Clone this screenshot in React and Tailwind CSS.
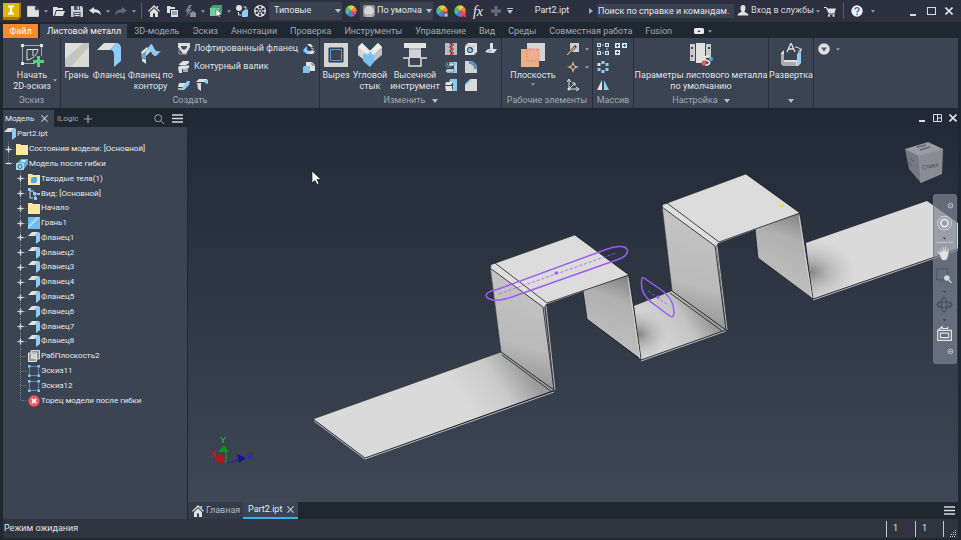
import { useState } from "react";

const BLUE = "#8ecbf5";
const LIGHT = "#dfe0e0";

// 12x12 glyphs used by the quick access bar, the ribbon and the browser
const glyphs = {
  newFile: <path d="M0 1h8l4 4v7H0z M8 1v4h4" fill={LIGHT} stroke="#8a8d94" strokeWidth=".6" />,
  open: <path d="M0 2h4l1 1h5v2H3L1 11H0z M3.5 6H12l-2 5H2z" fill={LIGHT} />,
  save: (
    <>
      <path d="M0 1h10.500L12 2.500V12H0z" fill="#c9ccd2" />
      <path d="M3 1h6v4H3z M2.500 7h7v5h-7z" fill="#4a5160" />
      <path d="M6.500 1.500h1.500v3H6.500z M3.500 8h5v1h-5z M3.500 10h5v1h-5z" fill={LIGHT} />
    </>
  ),
  undo: <path d="M0 5.500 5 2v2.300c4 0 6.500 1.200 7 6.200-1.500-2.500-3.500-3.200-7-3.200V9z" fill={LIGHT} />,
  redo: <path d="M12 5.500 7 2v2.300C3 4.300.5 5.500 0 10.500c1.500-2.500 3.500-3.200 7-3.200V9z" fill="#636975" />,
  home: (
    <>
      <path d="M6 0 12 6l-1 .8L6 2 1 6.800 0 6z M8.500 1H10v2.500L8.500 2z" fill={LIGHT} />
      <path d="M2 7.200 6 3.300l4 3.900V12H7V8.500H5V12H2z" fill={LIGHT} />
    </>
  ),
  pages: (
    <>
      <path d="M1 1h3l1 1h4v2H4v4H1z" fill={LIGHT} />
      <path d="M5 5h7v7H5z" fill={LIGHT} />
      <path d="M6 7h5M6 9h5" stroke="#596070" />
    </>
  ),
  bolt: (
    <>
      <path d="M5 0h3L5.500 4H8L2 12l1.500-5.500H1z" fill="#747a85" />
      <path d="M6 8l3-2 3 2v4H6z" fill="#8a8f99" />
    </>
  ),
  select: (
    <>
      <path d="M0 3 3 0h9v8l-3 3H0z" fill="#45a173" />
      <path d="M0 3h9v8H0z" fill="#71cc97" />
      <path d="M6 4l6 5.500-3 .2 1.500 2.300H9L8 10l-2 1.500z" fill="#fff" stroke="#303746" strokeWidth=".5" />
    </>
  ),
  parts: (
    <>
      <circle cx="3" cy="3" r="3" fill={LIGHT} />
      <path d="M7 6l1.500-1.500H12V11l-1 1H6V7z" fill={BLUE} />
      <path d="M2.500 7v3h3M7.500 2H10v2" fill="none" stroke={LIGHT} />
    </>
  ),
  ball: (
    <>
      <circle cx="6" cy="6" r="6" fill={LIGHT} />
      <circle cx="6" cy="6" r="2" fill="#2c3040" />
      <circle cx="6" cy="2.300" r="1.300" fill="#2c3040" />
      <circle cx="6" cy="9.700" r="1.300" fill="#2c3040" />
      <circle cx="2.800" cy="4.200" r="1.300" fill="#2c3040" />
      <circle cx="9.200" cy="4.200" r="1.300" fill="#2c3040" />
      <circle cx="2.800" cy="7.800" r="1.300" fill="#2c3040" />
      <circle cx="9.200" cy="7.800" r="1.300" fill="#2c3040" />
      <circle cx="6" cy="6" r="1" fill={LIGHT} />
    </>
  ),
  swatch: (
    <>
      <rect width="12" height="12" rx="2" fill="#8b8e95" />
      <circle cx="6" cy="6" r="5" fill="#d6d6d6" />
      <path d="M1 9h10l-2 3H3z" fill="#b6b8bb" />
    </>
  ),
  plus: <path d="M4.500 1h3v3.500H11v3H7.500V11h-3V7.500H1v-3h3.500z" fill="#666c78" />,
  user: <path d="M3.500 3a2.500 3 0 0 1 5 0c0 2-.8 2.500-1 4 2 .5 4 1.500 4 3.500H.5C.5 8.500 2.500 7.500 4.500 7c-.2-1.500-1-2-1-4z" fill={LIGHT} />,
  cart: (
    <>
      <path d="M0 2h2.500l.8 1.500H12L10.500 8H4.500L2 3H0z" fill={LIGHT} />
      <path d="M4 9h7" stroke={LIGHT} />
      <circle cx="5" cy="10.800" r="1.100" fill={LIGHT} />
      <circle cx="9.500" cy="10.800" r="1.100" fill={LIGHT} />
    </>
  ),
  help: (
    <>
      <circle cx="6" cy="6" r="5.700" fill="#edf0f4" />
      <path d="M4 4.600C4 1.900 8.200 2 8 4.500 7.900 5.900 6 5.800 6 7.400" fill="none" stroke="#3c69a5" strokeWidth="1.400" />
      <circle cx="6" cy="9.300" r=".9" fill="#3c69a5" />
    </>
  ),
  loft: (
    <>
      <path d="M0 0h12v4L8 11H5L0 4z" fill={LIGHT} />
      <path d="M3 3h6c0 5-6 5-6 0z" fill="#454d5b" />
      <path d="M1 6v5h8" fill="none" stroke="#9da1a8" />
    </>
  ),
  roll: (
    <>
      <path d="M1 3 5 0h6v2L8 4H1z M0 6l3-1.500h8V7L8 8H4v4H1z" fill={LIGHT} />
      <path d="M5 8h5v3H5z" fill="#a8abb0" />
    </>
  ),
  hem: (
    <>
      <path d="M1 4h8L6 8H0z" fill={LIGHT} />
      <path d="M4 9 9 2h3l-1 4-5 5H2z" fill={BLUE} />
      <path d="M0 9h5l-2 2H0z" fill="#b3b5b8" />
    </>
  ),
  bend: (
    <>
      <path d="M0 3l3-3h8l1 3H5z" fill={LIGHT} />
      <path d="M8 1h4v4L9 4z" fill={BLUE} />
      <path d="M1 4h4v8L2 10z" fill="#d6d7d8" />
    </>
  ),
  fold: (
    <>
      <path d="M4 1h4l2 3H8L6 3z M5 8h7l-2 3H4z" fill={LIGHT} />
      <path d="M1 6 4 3v4l4 2-4 2-4-3z" fill={BLUE} />
      <path d="M8 5c3 0 3 3 0 3" fill="none" stroke={LIGHT} />
    </>
  ),
  derive: (
    <>
      <path d="M3 1h6l3 3v6H3z" fill={LIGHT} />
      <path d="M9 1v3h3" fill="none" stroke="#6f7580" />
      <path d="M0 6l1-1h6v6l-1 1H0z" fill="#7cc3ee" />
    </>
  ),
  rip: (
    <>
      <path d="M0 0h12v12H0z" fill="#b9bbbe" />
      <path d="M4 0l2 2-2 2 2 2-2 2 2 2-1 2h3l1-2-2-2 2-2-2-2 2-2-1-2z" fill="#454b57" />
      <path d="M4 0l2 2-2 2 2 2-2 2 2 2-1 2M7 0l1 2-2 2 2 2-2 2 2 2-1 2" fill="none" stroke="#e5645f" strokeWidth=".9" />
    </>
  ),
  unfold: (
    <>
      <path d="M4 1h8v11H2V9h7V5H4z" fill="#a9d5ee" />
      <path d="M4 2h5v3H4z M2 8h7v3H0z" fill={LIGHT} stroke="#3f4856" strokeWidth=".6" />
      <path d="M0 4h3L1 1M1 6h5" fill="none" stroke="#4ba88a" strokeWidth="1.200" />
    </>
  ),
  refold: (
    <>
      <path d="M5 0h7v12H4l4-2V4H4z" fill="#8fc9e5" />
      <path d="M0 7h7v5H1z M1 3h7L6 6H0z" fill={LIGHT} />
    </>
  ),
  hole: (
    <>
      <path d="M0 3 3 0h9v9l-3 3H0z" fill={LIGHT} />
      <path d="M9 3v9M0 3h9l3-3" fill="none" stroke="#b3b5b8" strokeWidth=".6" />
      <circle cx="5" cy="7" r="3" fill="#394454" />
      <path d="M5 5a2 2 0 1 0 2 2z" fill={BLUE} />
    </>
  ),
  round: (
    <>
      <path d="M0 0h4c5 0 8 3 8 8v4H0z" fill="#d1d3d5" />
      <path d="M4 0c5 0 8 3 8 8L9 8C9 5 7 3 4 3z" fill="#5f91bd" />
    </>
  ),
  chamfer: (
    <>
      <path d="M6 0h6v12H0V6z" fill="#d9dadb" />
      <path d="M6 0 0 6" stroke="#83c6f2" strokeWidth="1.500" />
    </>
  ),
  punch: (
    <>
      <path d="M5 0h3v8H5z" fill={LIGHT} />
      <path d="M0 9l3-3h9l-3 4H5z" fill={LIGHT} />
      <path d="M3 7l3-1 1 3-3 1z" fill={BLUE} />
    </>
  ),
  axis: (
    <>
      <path d="M3 0h9v9H5L3 7z" fill="#cfcfce" />
      <path d="M0 12 9 3" stroke="#40372f" strokeWidth="2.500" />
      <path d="M0 12 8 4" stroke="#e8b184" strokeWidth="1.200" />
    </>
  ),
  point: (
    <>
      <path d="M6 0l1.500 4.500L12 6 7.500 7.500 6 12 4.500 7.500 0 6l4.500-1.500z" fill="#e8b184" />
      <circle cx="6" cy="6" r="2.200" fill="#3d4554" stroke="#e8b184" />
    </>
  ),
  ucs: (
    <>
      <path d="M2 1v9h9M2 10l6-6M0 3l2-3 2 3M9 8l3 2-3 2M5 4h3v3" fill="none" stroke={LIGHT} />
      <circle cx="2" cy="10" r="1.500" fill={LIGHT} />
    </>
  ),
  rectPattern: (
    <>
      <path d="M0 0h4v4H0z M8 0h4v4H8z M0 8h4v4H0z M8 8h4v4H8z" fill={LIGHT} />
      <path d="M5 2h2M5 10h2M2 5v2M10 5v2" stroke={BLUE} />
      <path d="M1 1h2v2H1z M9 1h2v2H9z M1 9h2v2H1z M9 9h2v2H9z" fill="#4c6f91" />
    </>
  ),
  sketchPattern: (
    <>
      <path d="M0 0h5v5H0z M7 0h5v5H7z M0 7h5v5H0z" fill="#d8eaf5" />
      <path d="M2.500 1v3M1 2.500h3M9.500 1v3M8 2.500h3M2.500 8v3M1 9.500h3" stroke="#315d82" />
    </>
  ),
  circPattern: (
    <g fill={BLUE}>
      <rect x="4.500" width="3" height="3" />
      <rect x="4.500" y="9" width="3" height="3" />
      <rect x=".5" y="2" width="3" height="3" fill={LIGHT} />
      <rect x="8.500" y="2" width="3" height="3" />
      <rect x=".5" y="7" width="3" height="3" />
      <rect x="8.500" y="7" width="3" height="3" />
    </g>
  ),
  mirror: (
    <>
      <path d="M5 1v10H0z" fill={LIGHT} />
      <path d="M7 1v10h5z" fill={BLUE} />
    </>
  ),
  more: (
    <>
      <circle cx="6" cy="6" r="5.800" fill={LIGHT} />
      <path d="M3 4.500h6L6 8.500z" fill="#555b67" />
    </>
  ),
  flange: (
    <>
      <path d="M0 4 4 0h6L7 4z" fill={LIGHT} />
      <path d="M7 3l3-3c2 0 2 1 2 3v6l-4 3V6C8 4 8 3.500 7 3z" fill={BLUE} />
    </>
  ),
  folder: <path d="M0 1h4l1 1h7v10H0z" fill="#fbe7a2" />,
  model: (
    <>
      <path d="M1 5 5 1h7v5l-4 5H1z" fill="#5fafd8" />
      <path d="M0 5h8v7H0z" fill="#a5d9e6" />
      <path d="M6 2h4l-1 2H5z" fill="#daf0f8" />
      <circle cx="4" cy="8.500" r="2" fill="none" stroke="#356c6b" />
    </>
  ),
  bodies: (
    <>
      <path d="M0 1h4l1 1h7v10H0z" fill="#fbe7a2" />
      <path d="M3 5l2-1h4v4L8 10H3z" fill="#54a9e7" />
    </>
  ),
  view: (
    <>
      <path d="M2 2v8h3M2 3h4M7 6v5M8 6h4" fill="none" stroke="#d3d9df" />
      <path d="M0 0h3v3H0z M5 4h3v3H5z M9 5h3v2H9z M6 9h3v3H6z" fill={BLUE} />
    </>
  ),
  face: (
    <>
      <path d="M0 0h12v12H0z" fill="#71bce9" />
      <path d="M0 9 9 0h3L0 12z" fill="#a8dafb" />
    </>
  ),
  plane: (
    <>
      <path d="M3 .5h8.500V9H3z" fill="#8c929b" stroke="#d5d7da" />
      <path d="M.5 3h8v8.500h-8z" fill="#969ba3" stroke="#e4e4e4" />
      <path d="M3 4h5v5H3z" fill="#d1d3d5" />
    </>
  ),
  sketch: (
    <>
      <path d="M1.500 1.500h9v9h-9z" fill="none" stroke="#568cb9" />
      <path d="M0 0h2.500v2.500H0z M9.500 0H12v2.500H9.500z M0 9.500h2.500V12H0z M9.500 9.500H12V12H9.500z" fill="#83c5ef" />
    </>
  ),
  stop: (
    <>
      <circle cx="6" cy="6" r="5.700" fill="#ef5758" />
      <path d="M3.800 3.800l4.400 4.400M8.200 3.800 3.800 8.200" stroke="#fff" strokeWidth="1.800" />
    </>
  ),
};

const wheelColors = ["#f6cf3e", "#f28d34", "#e9544e", "#a05bc4", "#4a7fd8", "#42b8c8", "#54bd66", "#b6d24b"];
const wheelSlices = [
  "M6 6 6 .3A5.700 5.700 0 0 1 10 2z",
  "M6 6 10 2A5.700 5.700 0 0 1 11.700 6z",
  "M6 6 11.700 6A5.700 5.700 0 0 1 10 10z",
  "M6 6 10 10A5.700 5.700 0 0 1 6 11.700z",
  "M6 6 6 11.700A5.700 5.700 0 0 1 2 10z",
  "M6 6 2 10A5.700 5.700 0 0 1 .3 6z",
  "M6 6 .3 6A5.700 5.700 0 0 1 2 2z",
  "M6 6 2 2A5.700 5.700 0 0 1 6 .3z",
];

function Glyph({ name }) {
  return (
    <svg viewBox="0 0 12 12" className="size-3 shrink-0" aria-hidden="true">
      {glyphs[name]}
    </svg>
  );
}

function Wheel({ badge }) {
  return (
    <svg viewBox="0 0 12 12" className="size-3 shrink-0" aria-hidden="true">
      {wheelSlices.map((d, i) => (
        <path key={d} d={d} fill={wheelColors[i]} />
      ))}
      {badge === "edit" ? <path d="M8 8h4v4H8z" fill="#8ecbf5" stroke="#2d3344" strokeWidth=".7" /> : null}
      {badge === "clear" ? <path d="M7 7l5 5M12 7l-5 5" stroke="#e8474b" strokeWidth="2" /> : null}
    </svg>
  );
}

function Caret({ dim }) {
  return (
    <svg viewBox="0 0 6 4" className={dim ? "h-[3px] w-1 shrink-0" : "h-1 w-1.5 shrink-0"} aria-hidden="true">
      <path d="M0 0h6L3 4z" fill={dim ? "#9da2ac" : "#b9bdc5"} />
    </svg>
  );
}

function QuickButton({ label, children }) {
  return (
    <button type="button" aria-label={label} className="flex h-full w-[18px] shrink-0 items-center justify-center">
      {children}
    </button>
  );
}

function MenuCaret({ label }) {
  return (
    <button type="button" aria-label={label} className="flex h-full w-2 shrink-0 items-center justify-center">
      <Caret dim />
    </button>
  );
}

function Picker({ label, value, icon }) {
  return (
    <div className="flex h-[18px] w-[73px] shrink-0 items-center bg-[#3a4252] pr-px pl-[3px]">
      {icon ? <Glyph name={icon} /> : null}
      <select
        aria-label={label}
        className="mr-1 min-w-0 flex-1 appearance-none overflow-hidden bg-transparent pl-0.5 text-[9px] text-[#e3e5e9] outline-none"
      >
        <option>{value}</option>
      </select>
      <Caret />
    </div>
  );
}

function TitleBar() {
  return (
    <header className="flex h-[22px] shrink-0 items-center bg-[#2c3040] px-[3px]">
      <button type="button" aria-label="Inventor" className="flex w-[21px] shrink-0">
        <svg viewBox="0 0 18 18" className="size-[18px]">
          <path d="M0 2h15l3-2v15l-3 3H0z" fill="#a37a08" />
          <path d="M0 1h16v14H0z" fill="#e2b50c" />
          <path d="M5 3.500h6v1.800H9.200v5.400H11v1.800H5v-1.800h1.800V5.300H5z" fill="#fff" />
        </svg>
      </button>
      <QuickButton label="Создать файл"><Glyph name="newFile" /></QuickButton>
      <MenuCaret label="Шаблоны" />
      <QuickButton label="Открыть"><Glyph name="open" /></QuickButton>
      <QuickButton label="Сохранить"><Glyph name="save" /></QuickButton>
      <QuickButton label="Отменить"><Glyph name="undo" /></QuickButton>
      <MenuCaret label="История отмены" />
      <QuickButton label="Повторить"><Glyph name="redo" /></QuickButton>
      <MenuCaret label="История повтора" />
      <span className="mx-[3px] h-4 w-px shrink-0 bg-[#5b606c]" />
      <QuickButton label="Главная"><Glyph name="home" /></QuickButton>
      <QuickButton label="Проекты"><Glyph name="pages" /></QuickButton>
      <QuickButton label="Обновить"><Glyph name="bolt" /></QuickButton>
      <MenuCaret label="Варианты обновления" />
      <QuickButton label="Выбор"><Glyph name="select" /></QuickButton>
      <MenuCaret label="Фильтр выбора" />
      <QuickButton label="Компоненты"><Glyph name="parts" /></QuickButton>
      <QuickButton label="Материал"><Glyph name="ball" /></QuickButton>
      <Picker label="Материал детали" value="Типовые" />
      <QuickButton label="Внешний вид"><Wheel /></QuickButton>
      <Picker label="Стиль внешнего вида" value="По умолчанию" icon="swatch" />
      <QuickButton label="Адаптировать вид"><Wheel badge="edit" /></QuickButton>
      <QuickButton label="Очистить вид"><Wheel badge="clear" /></QuickButton>
      <QuickButton label="Параметры">
        <span className="font-['Liberation_Serif',serif] text-[14px] text-[#e8e9ec] italic">fx</span>
      </QuickButton>
      <QuickButton label="Добавить"><Glyph name="plus" /></QuickButton>
      <button type="button" aria-label="Настроить панель" className="flex w-2.5 shrink-0 flex-col items-center gap-px">
        <span className="h-px w-1.5 bg-[#b9bdc5]" />
        <Caret />
      </button>
      <h1 className="min-w-0 flex-1 text-center text-[9px] text-[#e3e5e9]">Part2.ipt</h1>
      <svg viewBox="0 0 4 6" className="mr-1 h-1.5 w-1 shrink-0" aria-hidden="true">
        <path d="M0 0v6l4-3z" fill="#a4a8b1" />
      </svg>
      <input
        type="text"
        aria-label="Поиск"
        placeholder="Поиск по справке и командам."
        className="h-[14px] w-[137px] shrink-0 bg-[#3a4252] px-px text-[9px] text-white outline-none placeholder:text-[#e3e5e9]"
      />
      <button type="button" className="flex w-[87px] shrink-0 items-center gap-0.5 pl-[3px] text-[9px] whitespace-nowrap text-[#d5d8dd]">
        <Glyph name="user" />
        Вход в службы
        <Caret dim />
      </button>
      <QuickButton label="Магазин"><Glyph name="cart" /></QuickButton>
      <span className="mx-1 h-4 w-px shrink-0 bg-[#5b606c]" />
      <QuickButton label="Справка"><Glyph name="help" /></QuickButton>
      <button type="button" aria-label="Меню справки" className="mr-6 flex w-3.5 shrink-0 justify-center">
        <Caret dim />
      </button>
      <WindowButtons />
    </header>
  );
}

function WindowButtons() {
  return (
    <div className="flex shrink-0 items-center">
      <QuickButton label="Свернуть">
        <span className="mt-2 h-0.5 w-1.5 bg-[#d9dce1]" />
      </QuickButton>
      <QuickButton label="Развернуть">
        <span className="h-2 w-[9px] border border-[#d9dce1]" />
      </QuickButton>
      <QuickButton label="Закрыть"><Cross big /></QuickButton>
    </div>
  );
}

function Cross({ big }) {
  return (
    <svg viewBox="0 0 8 8" className={big ? "size-2 shrink-0" : "size-[7px] shrink-0"} aria-hidden="true">
      <path d="M.5.5l7 7M7.500.5l-7 7" stroke={big ? "#e1e3e7" : "#c3c7cd"} strokeWidth={big ? 1.6 : 1.2} />
    </svg>
  );
}

const tabs = [
  "Листовой металл",
  "3D-модель",
  "Эскиз",
  "Аннотации",
  "Проверка",
  "Инструменты",
  "Управление",
  "Вид",
  "Среды",
  "Совместная работа",
  "Fusion",
];

function RibbonTabs() {
  const [active, setActive] = useState(tabs[0]);

  return (
    <nav className="flex h-4 shrink-0 items-end bg-[#1f2731] px-[3px] text-[9px] whitespace-nowrap">
      <button type="button" className="mr-0.5 h-[14px] w-[35px] bg-[#f58a2f] leading-[14px] text-white">
        Файл
      </button>
      {tabs.map((t) => (
        <button
          key={t}
          type="button"
          onClick={() => setActive(t)}
          className={
            t === active
              ? "h-[14px] bg-[#3b4453] pr-1.5 pl-[7px] leading-[14px] text-[#f0f1f3]"
              : "h-[14px] pr-1.5 pl-[7px] leading-[14px] text-[#a2a7b0]"
          }
        >
          {t}
        </button>
      ))}
      <button type="button" aria-label="Вид ленты" className="ml-4 flex h-[14px] items-center gap-1">
        <svg viewBox="0 0 10 6" className="h-1.5 w-2.5">
          <rect width="10" height="6" rx="1.500" fill="#e6e8eb" />
          <path d="M3.500 4 5 2l1.500 2z" fill="#30384a" />
        </svg>
        <Caret dim />
      </button>
    </nav>
  );
}

const bigIcons = {
  start: (
    <>
      <path d="M2.500 4v16M4 2.500h16M21.500 4v9M4 20.500h11" fill="none" stroke="#a4a8af" />
      <path d="M1 1h3v3H1z M20 1h3v3h-3z M1 19h3v3H1z" fill={LIGHT} />
      <path d="M7 17V6.500h11C17 12 13 16 7 17z M13 6.500V13" fill="none" stroke={LIGHT} />
      <path d="M17 13h3v4h4v3h-4v4h-3v-4h-4v-3h4z" fill="#56d27a" />
    </>
  ),
  face: (
    <>
      <path d="M0 0h24v24H0z" fill="#c4c4c3" />
      <path d="M0 0h18L0 16z" fill="#dededd" />
      <path d="M24 4v20H6z" fill="#d9d9d8" />
    </>
  ),
  flange: (
    <>
      <path d="M0 7 7 0h12l-6 7z" fill={LIGHT} />
      <path d="M13 7l6-7c3 0 5 2 5 5v13l-7 6V12c0-3-1-5-4-5z" fill={BLUE} />
    </>
  ),
  contour: (
    <>
      <path d="M2 9 8 4c1 2 3 4 5 3L7 13v8l-4-3V12z" fill={LIGHT} />
      <path d="M8 6 12 1c3 1 3 7 6 7 2 1 4 0 4 0l-5 5c-5 0-4-6-7-6L6 12z" fill={BLUE} />
      <path d="M2 12 7 8v9l-4-1z" fill="#6fa2c5" />
    </>
  ),
  cut: (
    <>
      <path d="M0 0h24v24H0z" fill="#d5d5d4" />
      <path d="M5 5h14v14H5z" fill="#3b4453" stroke="#27384d" />
      <path d="M6.500 6.500h11v11h-11z" fill="none" stroke="#5b9bd0" />
    </>
  ),
  corner: (
    <>
      <path d="M0 4 4 0l8 8v14L0 12z" fill="#d3d4d4" />
      <path d="M24 4 20 0l-8 8v14l12-10z" fill="#bfc1c2" />
      <path d="M5 12l7-5 4 3v9l-4 5-7-6z" fill="#79c0ee" />
      <path d="M0 4 4 0l8 8-2 4z M24 4l-4-4-8 8 3 4z" fill="#ececeb" />
    </>
  ),
  punchTool: (
    <>
      <path d="M1 0h22v5H1z" fill="#e4e4e3" />
      <path d="M6 5h12v10H6z" fill="#d2d3d3" />
      <path d="M6 6h12" stroke="#999ca1" />
      <path d="M0 15h6v8h12v-8h6" fill="none" stroke={LIGHT} strokeWidth="1.500" />
    </>
  ),
  plane: (
    <>
      <path d="M6 0h18v18H6z" fill="#d4d4d3" />
      <path d="M0 6h18v18H0z" fill="#e8b083" />
      <path d="M6 6h12v12H6z" fill="#f0ae91" stroke="#dd8776" strokeDasharray="2 1" />
    </>
  ),
  settings: (
    <>
      <path d="M1 1h5v17H1z M17 1h5v14h-5z" fill="#c9cacb" />
      <path d="M7 0h9v20H7z" fill="#dfe0e0" />
      <path d="M2 4h2v2H2z M2 12h2v2H2z M19 4h2v2h-2z" fill="#434b5a" />
      <path d="M20 13c-7 0-4 4-1 5s2 4-3 4" fill="none" stroke="#f0f0f0" strokeWidth="1.500" />
      <circle cx="15" cy="20" r="2.500" fill="#ed5757" />
      <circle cx="22" cy="16" r="2" fill="#59a9df" />
    </>
  ),
  flat: (
    <>
      <path d="M2 10 5 7v10h14V9l3 2v9l-3 3H5l-3-3z" fill="#dedede" />
      <path d="M2 11h3v8h12v4H4l-2-2z" fill="#a9abad" />
      <path d="M18 11l4-3v11l-4 4z" fill="#91cdf5" />
      <path d="M8 9 12 0l4 9M9 6h6" fill="none" stroke={LIGHT} strokeWidth="1.300" />
      <path d="M16 4c3 0 5 1 6 4M22 5v3h-3" fill="none" stroke={LIGHT} />
    </>
  ),
};

function BigButton({ icon, lines, width, caret }) {
  return (
    <button type="button" className={`flex shrink-0 flex-col items-center self-start pt-[5px] text-[9px] leading-[11px] whitespace-nowrap text-[#e0e2e6] ${width}`}>
      <svg viewBox="0 0 24 24" className="mb-[3px] size-6" aria-hidden="true">
        {bigIcons[icon]}
      </svg>
      {lines.map((l) => (
        <span key={l}>{l}</span>
      ))}
      {caret ? <span className="mt-0.5 flex"><Caret dim /></span> : null}
    </button>
  );
}

function SmallButton({ icon, label, text, caret }) {
  return (
    <button type="button" aria-label={label} className="flex h-[18px] items-center gap-1 text-[9px] whitespace-nowrap text-[#e0e2e6]">
      <Glyph name={icon} />
      {text}
      {caret ? <span className="ml-0.5 flex"><Caret dim /></span> : null}
    </button>
  );
}

function Group({ title, width, menu, children }) {
  return (
    <section className={`flex shrink-0 flex-col border-r border-[#252e39] ${width}`}>
      <div className="flex flex-1">{children}</div>
      <footer className="flex h-[14px] items-center justify-center gap-1.5 text-[9px] whitespace-nowrap text-[#a4a9b2]">
        {title}
        {menu ? <Caret /> : null}
      </footer>
    </section>
  );
}

function Ribbon() {
  return (
    <div className="mx-[3px] flex h-[70px] shrink-0 bg-[#3b4453]">
      <Group title="Эскиз" width="w-[58px]">
        <BigButton icon="start" lines={["Начать", "2D-эскиз"]} width="w-[50px] ml-1" />
        <button type="button" aria-label="Варианты эскиза" className="mb-3 -ml-1 self-end">
          <Caret dim />
        </button>
      </Group>
      <Group title="Создать" width="w-[259px]">
        <BigButton icon="face" lines={["Грань"]} width="w-[31px]" />
        <BigButton icon="flange" lines={["Фланец"]} width="w-[34px]" />
        <BigButton icon="contour" lines={["Фланец по", "контору"]} width="w-[49px]" />
        <div className="ml-[3px] flex w-[125px] flex-col pt-0.5">
          <SmallButton icon="loft" text="Лофтированный фланец" />
          <SmallButton icon="roll" text="Контурный валик" />
          <div className="flex gap-1.5">
            <SmallButton icon="hem" label="Отбортовка" />
            <SmallButton icon="bend" label="Сгиб" />
          </div>
        </div>
        <div className="flex flex-col pt-0.5">
          <SmallButton icon="fold" label="Согнуть" />
          <SmallButton icon="derive" label="Производный" />
        </div>
      </Group>
      <Group title="Изменить" width="w-[182px]" menu>
        <BigButton icon="cut" lines={["Вырез"]} width="w-[32px]" />
        <BigButton icon="corner" lines={["Угловой", "стык"]} width="w-[36px]" />
        <BigButton icon="punchTool" lines={["Высечной", "инструмент"]} width="w-[54px]" />
        <div className="ml-[3px] grid grid-cols-[20px_20px_12px] content-start pt-0.5">
          <SmallButton icon="rip" label="Разрыв" />
          <SmallButton icon="hole" label="Отверстие" />
          <SmallButton icon="punch" label="Стык" />
          <SmallButton icon="unfold" label="Разогнуть" />
          <SmallButton icon="round" label="Скругление" />
          <span />
          <SmallButton icon="refold" label="Повторно согнуть" />
          <SmallButton icon="chamfer" label="Фаска" />
        </div>
      </Group>
      <Group title="Рабочие элементы" width="w-[91px]">
        <BigButton icon="plane" lines={["Плоскость"]} width="w-[62px]" caret />
        <div className="ml-[3px] flex flex-col pt-0.5">
          <SmallButton icon="axis" label="Ось" caret />
          <SmallButton icon="point" label="Точка" caret />
          <SmallButton icon="ucs" label="ПСК" />
        </div>
      </Group>
      <Group title="Массив" width="w-[41px]">
        <div className="ml-1 grid grid-cols-[18px_12px] content-start pt-0.5">
          <SmallButton icon="rectPattern" label="Прямоугольный массив" />
          <SmallButton icon="sketchPattern" label="Массив по эскизу" />
          <SmallButton icon="circPattern" label="Круговой массив" />
          <span />
          <SmallButton icon="mirror" label="Зеркало" />
        </div>
      </Group>
      <Group title="Настройка" width="w-[135px]" menu>
        <BigButton icon="settings" lines={["Параметры листового металла", "по умолчанию"]} width="w-full" />
      </Group>
      <Group width="w-[45px]" menu>
        <BigButton icon="flat" lines={["Развертка"]} width="w-full" />
      </Group>
      <div className="ml-1 pt-0.5">
        <SmallButton icon="more" label="Дополнительно" caret />
      </div>
    </div>
  );
}

const tree = [
  { label: "Part2.ipt", icon: "flange", level: 0 },
  { label: "Состояния модели: [Основной]", icon: "folder", level: 1, toggle: "+" },
  { label: "Модель после гибки", icon: "model", level: 1, toggle: "-" },
  { label: "Твердые тела(1)", icon: "bodies", level: 2, toggle: "+" },
  { label: "Вид: [Основной]", icon: "view", level: 2, toggle: "+" },
  { label: "Начало", icon: "folder", level: 2, toggle: "+" },
  { label: "Грань1", icon: "face", level: 2, toggle: "+" },
  ...[1, 2, 3, 4, 5, 6, 7, 8].map((n) => ({ label: `Фланец${n}`, icon: "flange", level: 2, toggle: "+" })),
  { label: "РабПлоскость2", icon: "plane", level: 2 },
  { label: "Эскиз11", icon: "sketch", level: 2 },
  { label: "Эскиз12", icon: "sketch", level: 2 },
  { label: "Торец модели после гибки", icon: "stop", level: 2, last: true },
];

const indent = ["pl-px", "pl-0", "pl-3"];

function TreeRow({ item }) {
  return (
    <li className={`flex min-h-0 items-center whitespace-nowrap ${indent[item.level]}`}>
      {item.level > 0 ? (
        <svg viewBox="0 0 12 15" className="mr-px h-[15px] w-3 shrink-0" aria-hidden="true">
          <path
            d={item.last || item.toggle === "-" ? "M5.500 0v7.500H12" : "M5.500 0v15M5.500 7.500H12"}
            fill="none"
            stroke="#767d89"
            strokeDasharray="1 1"
          />
          {item.toggle ? <path d="M2.500 7.500h6" stroke="#d5d8dd" strokeWidth="1.300" /> : null}
          {item.toggle === "+" ? <path d="M5.500 4.500v6" stroke="#d5d8dd" strokeWidth="1.300" /> : null}
        </svg>
      ) : null}
      <Glyph name={item.icon} />
      <span className="ml-px">{item.label}</span>
    </li>
  );
}

function Browser() {
  return (
    <aside className="flex w-[184px] shrink-0 flex-col bg-[#3b4453] text-[8px] text-[#e8eaed]">
      <div className="flex h-[17px] shrink-0 items-center bg-[#1f2731]">
        <button type="button" className="flex h-full w-[51px] items-center justify-between bg-[#3b4453] pr-1.5 pl-0.5">
          Модель
          <Cross />
        </button>
        <button type="button" className="ml-[3px] text-[#a2a7b0]">iLogic</button>
        <button type="button" aria-label="Добавить вкладку" className="ml-1.5">
          <svg viewBox="0 0 8 8" className="size-2">
            <path d="M4 0v8M0 4h8" stroke="#a2a7b0" strokeWidth="1.200" />
          </svg>
        </button>
        <button type="button" aria-label="Поиск в браузере" className="mr-2 ml-auto">
          <svg viewBox="0 0 10 10" className="size-2.5">
            <circle cx="4.200" cy="4.200" r="3.500" fill="none" stroke="#9da3ad" />
            <path d="M7 7l3 3" stroke="#9da3ad" />
          </svg>
        </button>
        <button type="button" aria-label="Меню браузера" className="mr-1">
          <Bars />
        </button>
      </div>
      <ul className="grid h-[281px] auto-rows-fr">
        {tree.map((item) => (
          <TreeRow key={item.label} item={item} />
        ))}
      </ul>
    </aside>
  );
}

function Bars() {
  return (
    <svg viewBox="0 0 11 9" className="h-[9px] w-[11px]" aria-hidden="true">
      <path d="M0 1h11M0 4.500h11M0 8h11" stroke="#d5d8dd" strokeWidth="1.500" />
    </svg>
  );
}

function Scene() {
  return (
    <svg
      viewBox="188 110 770 392"
      preserveAspectRatio="xMidYMid slice"
      className="absolute inset-0 size-full"
      role="img"
      aria-label="3D-вид детали"
    >
      <defs>
        <linearGradient id="wall" x1=".35" y1="0" x2=".2" y2="1">
          <stop offset="0" stopColor="#c6c6c6" />
          <stop offset=".6" stopColor="#bababa" />
          <stop offset=".88" stopColor="#989898" />
          <stop offset="1" stopColor="#a6a6a6" />
        </linearGradient>
        <linearGradient id="inner" x1=".7" y1="0" x2=".45" y2="1">
          <stop offset="0" stopColor="#828282" />
          <stop offset=".3" stopColor="#b0b0b0" />
          <stop offset="1" stopColor="#c2c2c2" />
        </linearGradient>
        <linearGradient id="plate" gradientUnits="userSpaceOnUse" x1="465" y1="404" x2="524" y2="364">
          <stop offset="0" stopColor="#dadada" />
          <stop offset=".55" stopColor="#c9c9c9" />
          <stop offset="1" stopColor="#999" />
        </linearGradient>
        <linearGradient id="valley" gradientUnits="userSpaceOnUse" x1="658" y1="336" x2="700" y2="308">
          <stop offset="0" stopColor="#d2d2d2" />
          <stop offset=".6" stopColor="#c4c4c4" />
          <stop offset="1" stopColor="#9a9a9a" />
        </linearGradient>
        <radialGradient id="shade">
          <stop offset="0" stopColor="#666" stopOpacity=".75" />
          <stop offset=".4" stopColor="#808080" stopOpacity=".4" />
          <stop offset="1" stopColor="#aaa" stopOpacity="0" />
        </radialGradient>
        <clipPath id="valleyClip"><path d="M634 306 672 291 726 330 641 360z" /></clipPath>
        <clipPath id="rightClip"><path d="M806 243 927 201 958 223v26L813 299z" /></clipPath>
      </defs>

      {/* right plate and valley floor lie behind the walls */}
      <path d="M806 243 927 201 958 223v26L813 299z" fill="#dadada" />
      <ellipse cx="810" cy="272" rx="46" ry="32" fill="url(#shade)" clipPath="url(#rightClip)" />
      <path d="M634 306 672 291 726 330 641 360z" fill="url(#valley)" />
      <ellipse cx="638" cy="334" rx="30" ry="24" fill="url(#shade)" clipPath="url(#valleyClip)" />
      <path d="M313 419 501 352l53 38-189 68z" fill="url(#plate)" />

      <path d="M755 229 800 213l13 86-55-41z" fill="url(#inner)" />
      <path d="M583 291 629 275l12 84-54-40z" fill="url(#inner)" />
      <path d="M490 267 544 305l10 85-53-38z" fill="url(#wall)" />
      <path d="M662 206 716 244l10 86-54-39z" fill="url(#wall)" />
      <path d="M490 265 575 235l54 40-85 30z" fill="#dcdcdc" />
      <path d="M662 205 746 174l54 39-84 31z" fill="#dcdcdc" />
      <path d="M491 267 545 306M663 206 717 245" stroke="#e0e0e0" strokeWidth="3" />

      <g fill="none" stroke="#1b1d20" strokeWidth=".8">
        <path d="M313 419 365 458 554 391 M501 352 554 390 M502 355 552 392" />
        <path d="M490 268 543 307 554 390 M495 263 547 303 629 275 641 359 M575 235l54 40" />
        <path d="M583 291l4 28 54 41 85-30 M672 291l54 39 M670 293 722 331" />
        <path d="M662 207 715 246 726 330 M667 203 719 242 800 213 813 299 M746 174l54 39" />
        <path d="M755 229l3 29 55 41 145-50" />
      </g>
      <g fill="none" stroke="#1b1d20" strokeWidth=".5">
        <path d="M490 265l11 87M490 265 575 235M662 205l10 86M662 205 746 174M313 419 501 352" />
      </g>
      <g fill="none" stroke="#d8d8d8" strokeWidth=".8">
        <path d="M314 421 365 459 554 392 M546 306l9 84 M628 278l12 81 M717 246l10 84 M799 216l13 82" />
        <path d="M641 361 726 331 M813 300 958 250" />
      </g>

      <g fill="none" stroke="#9a5cf5" strokeWidth="1.500">
        <path d="M497 289.500 606 249.500C619 244.500 627 246 627.500 251c0 4-5 7-11 9L509 298c-13 4-22 2-23-2.500 0-3 4-4.500 11-6z" />
        <path d="M644 278 660 289c9 6 14 15 14 24 0 4-2 4.500-5 2.500L655 305c-9-6-14-14-13.500-23 0-4 1-5 2.500-4z" />
        <path d="M499 294 616 253M648 291l20 14" strokeWidth=".8" strokeDasharray="3 2" />
      </g>
      <path d="M554 273l2.500-2 2 2-2 2z M656 297l2-2 2 2-2 2z" fill="#9a5cf5" />
      <path d="M780 205h4v2h-4z" fill="#eedb32" />

      {/* view cube */}
      <path d="M905 149 928 142l15 7-24 7z" fill="#999ca1" />
      <path d="M905 149l14 7 2 27-12-14z" fill="#777a80" />
      <path d="M919 156l24-7-1 25-21 9z" fill="#898c91" />
      <path d="M905 149 919 156 943 149M919 156l2 27" stroke="#a6a8ac" strokeWidth=".6" fill="none" />
      <path d="M917 147l9-2M920 150l10-3M910 158l4 4M908 162l4 4" stroke="#62666f" strokeWidth="1.500" />
      <text x="922" y="170" transform="rotate(-13 922 170)" fontSize="6" fill="#4d515a" className="font-[Roboto,sans-serif]">
        Слева
      </text>

      {/* axis triad */}
      <path d="M226 463V451" stroke="#18a52a" />
      <path d="M218 452h11l-5-7z" fill="#129022" />
      <path d="M227 463l12-3" stroke="#1616c4" strokeDasharray="3 1" />
      <path d="M237 454l9 4-7 5z" fill="#1111a6" />
      <path d="M217 456l5-2 3 4-2 5-6-1-2-3z" fill="#ba1515" />
      <g fontSize="9" className="font-['Liberation_Sans',sans-serif]">
        <text x="220" y="443" fontWeight="700" fill="#15b52d">Y</text>
        <text x="210" y="457" fontWeight="700" fill="#c31818">X</text>
        <text x="247" y="459" fontWeight="700" fill="#2222d8">Z</text>
      </g>

      <path d="M312 171v12l3-2.500 2 4 2-1-2-4h4z" fill="#fff" stroke="#15181d" strokeWidth=".7" />
    </svg>
  );
}

function NavBar() {
  return (
    <div className="absolute top-[84px] right-px flex h-[170px] w-6 flex-col items-center rounded-[3px] border border-[#6e7684]/60 bg-[#7d8593]/70">
      <svg viewBox="0 0 24 170" className="h-full w-full" aria-hidden="true">
        <g fill="none" stroke="#c7cbd1">
          <circle cx="18" cy="5" r="2.500" />
          <path d="M17 4l2 2M19 4l-2 2" strokeWidth=".7" />
          <circle cx="11.500" cy="24" r="7.500" stroke="#d8dade" />
          <circle cx="11.500" cy="24" r="4" strokeWidth="2" stroke="#e3e4e7" />
          <path d="M2 45h19" />
        </g>
        <path
          d="M6 58l-3-3 1-1 3 2-1-5h1l2 4V49h1.500l.5 5 1-5H13.500v6l2-4 1 .5-1 8c-1 4-2 5-5 5s-3-3-4.500-6.500z"
          fill="#e2e3e5"
          stroke="#828792"
          strokeWidth=".6"
        />
        <g fill="none" stroke="#3f4653">
          <path d="M3 74h12v12H3z" strokeDasharray="2 1" />
          <path d="M11 105c4 0 4 16 0 16s-4-16 0-16z M4 113c0-4 15-4 15 0s-15 4-15 0z M6 109l-3 4 3 4M17 109l3 4-3 4" />
        </g>
        <circle cx="14" cy="84" r="3" fill="#d5d8dc" />
        <path d="M16 86l3 3" stroke="#d5d8dc" strokeWidth="1.500" />
        <path d="M9.500 40h4l-2 2z M9.500 98h4l-2 2z M9.500 129h4l-2 2z" fill="#343b47" />
        <path d="M4 141h15v11H4z M7 144h9v5H7z M5 140l4-3v2h6v-2" fill="none" stroke="#e2e4e7" strokeWidth="1.300" />
        <circle cx="18" cy="164" r="2.500" fill="none" stroke="#c7cbd1" />
        <path d="M16.500 164h3" stroke="#c7cbd1" />
      </svg>
    </div>
  );
}

function Viewport() {
  return (
    <main className="flex min-w-0 flex-1 flex-col">
      <div className="relative min-h-0 flex-1 overflow-hidden bg-linear-to-b from-[#222936] to-[#3e4755]">
        <Scene />
        <div className="absolute top-0 right-0 flex h-4 items-center gap-[7px]">
          <button type="button" aria-label="Свернуть документ">
            <span className="mt-1.5 block h-0.5 w-1.5 bg-[#d9dce1]" />
          </button>
          <button type="button" aria-label="Упорядочить окна" className="ml-px">
            <svg viewBox="0 0 9 8" className="h-2 w-[9px]">
              <path d="M.5.5h8v7h-8zM4.500.5v7M4.500 4h4" fill="none" stroke="#d9dce1" />
            </svg>
          </button>
          <button type="button" aria-label="Закрыть документ" className="mr-px">
            <Cross big />
          </button>
        </div>
        <NavBar />
      </div>
      <div className="flex h-[17px] shrink-0 items-stretch bg-[#1f2731] text-[9px]">
        <button type="button" className="flex w-[55px] items-center gap-0.5 bg-[#333c49] pl-1 text-[#b4b8c0]">
          <Glyph name="home" />
          Главная
        </button>
        <button type="button" className="flex w-[55px] items-center justify-between border-b-2 border-[#35b2e8] bg-[#3b4453] pr-1 pl-[5px] text-[#eceef0]">
          Part2.ipt
          <Cross />
        </button>
        <button type="button" aria-label="Список документов" className="mr-[3px] ml-auto">
          <Bars />
        </button>
      </div>
    </main>
  );
}

function StatusBar() {
  return (
    <footer className="mx-[3px] mb-0.5 flex h-[19px] shrink-0 items-center bg-[#303340] pl-px text-[9px] text-[#e1e3e7]">
      <span className="flex-1">Режим ожидания</span>
      <span className="flex h-4 w-[29px] items-center border-l border-[#c3c6cc] pl-1.5">1</span>
      <span className="flex h-4 w-[28px] items-center border-l border-[#c3c6cc] pl-1.5">1</span>
      <span className="flex h-4 w-[15px] items-end justify-end border-l border-[#c3c6cc]">
        <svg viewBox="0 0 7 7" className="mr-px size-[7px]" aria-hidden="true">
          <path d="M5 0h1v1H5z M3 2h1v1H3z M5 2h1v1H5z M1 4h1v1H1z M3 4h1v1H3z M5 4h1v1H5z M0 6h1v1H0z M2 6h1v1H2z M4 6h1v1H4z" fill="#c3c6cc" />
        </svg>
      </span>
    </footer>
  );
}

export default function App() {
  return (
    <div className="flex h-screen flex-col overflow-hidden bg-[#1f2731] font-[Roboto,'Noto_Sans',sans-serif]">
      <TitleBar />
      <RibbonTabs />
      <Ribbon />
      <div className="mx-[3px] mt-0.5 flex min-h-0 flex-1 gap-px">
        <Browser />
        <Viewport />
      </div>
      <StatusBar />
    </div>
  );
}
